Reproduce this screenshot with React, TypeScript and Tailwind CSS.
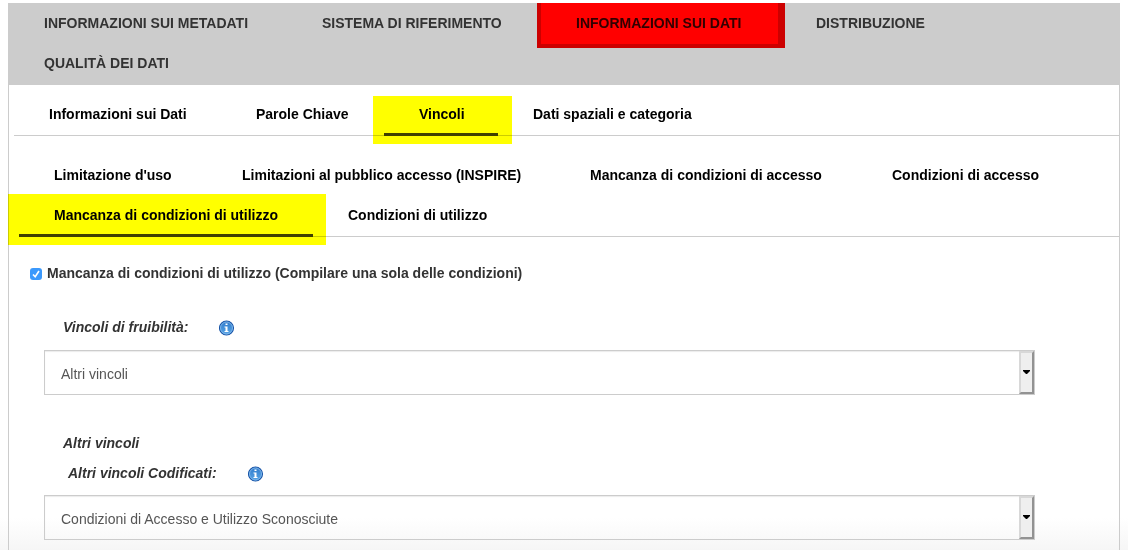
import { useState } from "react";

type Tab = { label: string; width: string };

const mainTabs: Tab[] = [
  { label: "INFORMAZIONI SUI METADATI", width: "w-[278px]" },
  { label: "SISTEMA DI RIFERIMENTO", width: "w-[254px]" },
  { label: "INFORMAZIONI SUI DATI", width: "w-[240px]" },
  { label: "DISTRIBUZIONE", width: "w-[146px]" },
  { label: "QUALITÀ DEI DATI", width: "w-[200px]" },
];

const dataTabs: Tab[] = [
  { label: "Informazioni sui Dati", width: "w-[207px]" },
  { label: "Parole Chiave", width: "w-[163px]" },
  { label: "Vincoli", width: "w-[114px]" },
  { label: "Dati spaziali e categoria", width: "w-[230px]" },
];

const constraintTabs: Tab[] = [
  { label: "Limitazione d'uso", width: "w-[188px]" },
  { label: "Limitazioni al pubblico accesso (INSPIRE)", width: "w-[348px]" },
  { label: "Mancanza di condizioni di accesso", width: "w-[302px]" },
  { label: "Condizioni di accesso", width: "w-[217px]" },
  { label: "Mancanza di condizioni di utilizzo", width: "w-[294px]" },
  { label: "Condizioni di utilizzo", width: "w-[208px]" },
];

function SubTabs({
  name,
  tabs,
  active,
  highlight,
}: {
  name: string;
  tabs: Tab[];
  active: string;
  highlight: string;
}) {
  return (
    <nav aria-label={name}>
      <ul className="flex flex-wrap border-b border-[#ccc] pb-px">
        {tabs.map((tab) => (
          <li key={tab.label} className={`relative ${tab.width}`}>
            <a
              href="#"
              aria-current={tab.label === active ? "page" : undefined}
              className="block h-10 pl-[35px] leading-10 font-bold whitespace-nowrap text-black"
            >
              {tab.label}
            </a>
            {tab.label === active && (
              <>
                <span className="absolute inset-x-0 -bottom-0.5 h-[3px] bg-[#404040]" />
                <span className={`pointer-events-none absolute bg-[#ff0] mix-blend-multiply ${highlight}`} />
              </>
            )}
          </li>
        ))}
      </ul>
    </nav>
  );
}

function InfoIcon() {
  return (
    <svg width="16" height="16" viewBox="0 0 16 16" aria-hidden="true">
      <defs>
        <linearGradient id="info-fill" x1="0" y1="0" x2="0" y2="1">
          <stop offset="0" stopColor="#2f7acb" />
          <stop offset="1" stopColor="#5aa6e6" />
        </linearGradient>
      </defs>
      <circle cx="7.5" cy="8" r="7" fill="url(#info-fill)" stroke="#1a55a8" strokeWidth="1.1" />
      <circle cx="7.5" cy="8" r="6" fill="none" stroke="#8cbfee" strokeWidth="0.8" />
      <path d="M6.5 3.5h2v1.6h-2zM5.5 6.5h3v4.5h1v1h-4v-1h1V7.5h-1z" fill="#fff" />
    </svg>
  );
}

function SelectBox({ id, options }: { id: string; options: string[] }) {
  return (
    <div className="relative mr-[84px] ml-[35px]">
      <select
        id={id}
        className="block h-[45px] w-full appearance-none border border-[#ccc] bg-transparent pt-0.5 pr-5 pl-4 text-[#555] shadow-[inset_0_1px_1px_rgba(0,0,0,0.08)]"
      >
        {options.map((option) => (
          <option key={option}>{option}</option>
        ))}
      </select>
      <span className="pointer-events-none absolute inset-y-px right-px flex w-[15px] items-center justify-center border-2 border-t-[#d8d8d8] border-r-[#929292] border-b-[#929292] border-l-[#d8d8d8] bg-[#efefef] pb-0.5">
        <svg width="7" height="4" viewBox="0 0 7 4" className="shrink-0" aria-hidden="true">
          <path d="M0 0h7v1L4 4H3L0 1z" fill="#000" />
        </svg>
      </span>
    </div>
  );
}

function FieldLabel({ id, text, indent }: { id: string; text: string; indent: string }) {
  return (
    <div className={`flex h-5 items-center gap-[31px] ${indent}`}>
      <label htmlFor={id} className="font-bold italic">
        {text}
      </label>
      <button type="button" aria-label={`Aiuto: ${text}`} className="mt-0.5">
        <InfoIcon />
      </button>
    </div>
  );
}

export default function App() {
  const [checked, setChecked] = useState(true);

  return (
    <div className="flex min-h-screen flex-col bg-[linear-gradient(to_top,#f6f6f6,#fff_32px)] px-2 pt-[3px] font-['Liberation_Sans',Arial,sans-serif] text-sm text-[#333]">
      <nav aria-label="Sezioni" className="bg-[#ccc] pb-0.5">
        <ul className="flex flex-wrap">
          {mainTabs.map((tab) => {
            const active = tab.label === "INFORMAZIONI SUI DATI";
            return (
              <li key={tab.label} className={`relative h-10 ${tab.width}`}>
                <a
                  href="#"
                  aria-current={active ? "page" : undefined}
                  className={`block leading-10 font-bold whitespace-nowrap ${
                    active ? "mr-0.5 ml-px h-[41px] bg-white pl-[35px]" : "h-10 pl-9"
                  }`}
                >
                  {tab.label}
                </a>
                {active && (
                  <span className="pointer-events-none absolute top-0 -right-[5px] -bottom-[5px] -left-[3px] bg-[#f00] mix-blend-multiply" />
                )}
              </li>
            );
          })}
        </ul>
      </nav>

      <main className="grow border-x border-[#ccc] pt-[9px] pb-2">
        <div className="ml-[5px]">
          <SubTabs
            name="Informazioni sui Dati"
            tabs={dataTabs}
            active="Vincoli"
            highlight="top-0.5 -right-3.5 -bottom-2.5 -left-[11px]"
          />
        </div>
        <div className="mt-[19px] ml-2.5">
          <SubTabs
            name="Vincoli"
            tabs={constraintTabs}
            active="Mancanza di condizioni di utilizzo"
            highlight="-top-px -right-[13px] -bottom-2.5 -left-[11px]"
          />
        </div>

        <form>
          <div className="mt-[26px] ml-[21px] flex h-5 items-center gap-[5px]">
            <span className="relative mt-px flex">
              <input
                id="no-conditions"
                type="checkbox"
                checked={checked}
                onChange={(event) => setChecked(event.target.checked)}
                className="size-3 appearance-none rounded-[3px] checked:bg-[#3b99fc] not-checked:border not-checked:border-[#999]"
              />
              {checked && (
                <svg className="pointer-events-none absolute inset-0" width="12" height="12" viewBox="0 0 12 12" aria-hidden="true">
                  <path d="M3 6.5l2.2 2.3L9 3" fill="none" stroke="#fff" strokeWidth="1.6" />
                </svg>
              )}
            </span>
            <label htmlFor="no-conditions" className="font-bold">
              Mancanza di condizioni di utilizzo (Compilare una sola delle condizioni)
            </label>
          </div>

          <div className="mt-[34px]">
            <FieldLabel id="usability" text="Vincoli di fruibilità:" indent="ml-[54px]" />
            <div className="mt-[13px]">
              <SelectBox id="usability" options={["Altri vincoli", "Copyright", "Licenza"]} />
            </div>
          </div>

          <fieldset className="mt-[38px]">
            <legend className="ml-[54px] h-5 leading-5 font-bold italic">Altri vincoli</legend>
            <div className="mt-2.5">
              <FieldLabel id="coded" text="Altri vincoli Codificati:" indent="ml-[59px]" />
            </div>
            <div className="mt-3">
              <SelectBox
                id="coded"
                options={["Condizioni di Accesso e Utilizzo Sconosciute", "Nessuna condizione applicabile"]}
              />
            </div>
          </fieldset>
        </form>
      </main>
    </div>
  );
}
